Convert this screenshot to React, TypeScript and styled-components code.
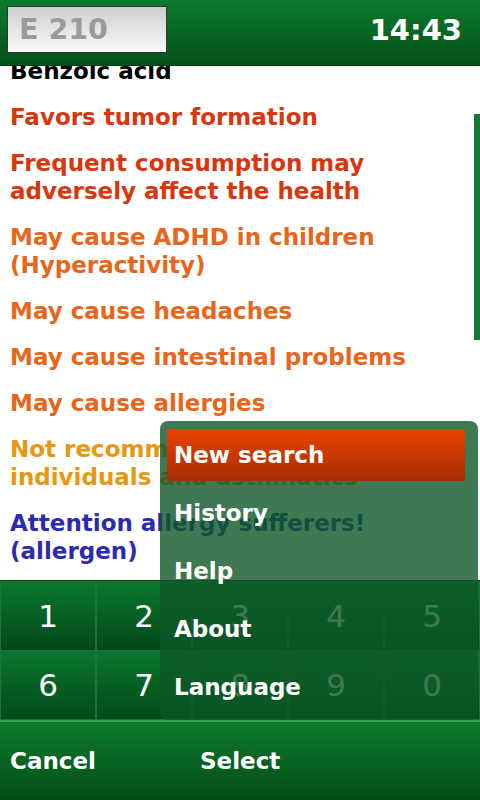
import React from 'react'
import styled, { createGlobalStyle } from 'styled-components'

const GlobalStyle = createGlobalStyle`
  html, body {
    margin: 0;
    padding: 0;
    background: #fff;
  }
  * { box-sizing: border-box; }
`

const Screen = styled.div`
  position: relative;
  width: 480px;
  height: 800px;
  display: flex;
  flex-direction: column;
  overflow: hidden;
  font-family: "DejaVu Sans", "Liberation Sans", sans-serif;
  font-weight: bold;
  background: #fff;
`

const Header = styled.div`
  height: 66px;
  flex-shrink: 0;
  display: flex;
  align-items: center;
  justify-content: space-between;
  padding: 0 18px 0 7px;
  background: linear-gradient(#0d7a2e, #045019);
  border-bottom: 1px solid #023a10;
  z-index: 2;
`

const SearchBox = styled.div`
  width: 160px;
  height: 47px;
  margin-bottom: 6px;
  border: 1px solid #2c3a2e;
  background: linear-gradient(#cfcfcf, #fafafa);
  color: #9a9a9a;
  font-size: 28.5px;
  line-height: 45px;
  padding-left: 11px;
`

const Clock = styled.div`
  color: #fff;
  font-size: 29px;
  margin-bottom: 6px;
`

const Content = styled.div`
  position: relative;
  flex: 1;
  overflow: hidden;
`

const List = styled.div`
  margin-top: -9px;
  padding: 0 10px 0 10px;
`

const Item = styled.div<{ $color: string }>`
  color: ${p => p.$color};
  font-size: 23px;
  line-height: 28px;
  margin-bottom: 18px;
`

const ScrollBar = styled.div`
  position: absolute;
  right: 0;
  top: 48px;
  width: 6px;
  height: 226px;
  background: #137a36;
`

const Keypad = styled.div`
  flex-shrink: 0;
  height: 140px;
  display: grid;
  grid-template-columns: repeat(5, 1fr);
  grid-template-rows: repeat(2, 1fr);
  gap: 2px;
  padding: 1px;
  background: #24703a;
  border-top: 1px solid #0a3d16;
`

const Key = styled.div`
  display: flex;
  align-items: center;
  justify-content: center;
  background: linear-gradient(#0b772c, #03481a);
  color: #fff;
  font-weight: normal;
  font-size: 31px;
`

const BottomBar = styled.div`
  height: 80px;
  flex-shrink: 0;
  display: flex;
  align-items: center;
  padding-left: 10px;
  border-top: 2px solid #3aa04f;
  background: linear-gradient(#0d7a2d, #034d18);
`

const SoftKey = styled.div<{ $width: number }>`
  width: ${p => p.$width}px;
  color: #fff;
  font-size: 23px;
`

const Menu = styled.div`
  position: absolute;
  right: 2px;
  bottom: 80px;
  width: 318px;
  padding: 5px 13px 4px 7px;
  border-radius: 8px 8px 6px 6px;
  background: rgba(14, 88, 40, 0.8);
  display: flex;
  flex-direction: column;
  z-index: 3;
`

const MenuItem = styled.div<{ $active?: boolean }>`
  height: 52px;
  margin: 3px 0;
  display: flex;
  align-items: center;
  padding-left: 7px;
  color: #fff;
  font-size: 23px;
  background: ${p => (p.$active ? 'linear-gradient(#e94200, #a62e04)' : 'transparent')};
`

const items: { text: string; color: string }[] = [
  { text: 'Benzoic acid', color: '#000' },
  { text: 'Favors tumor formation', color: '#d9360e' },
  { text: 'Frequent consumption may adversely affect the health', color: '#d9360e' },
  { text: 'May cause ADHD in children (Hyperactivity)', color: '#e8651a' },
  { text: 'May cause headaches', color: '#e8651a' },
  { text: 'May cause intestinal problems', color: '#e8651a' },
  { text: 'May cause allergies', color: '#e8651a' },
  { text: 'Not recommended for sensitive individuals and asthmatics', color: '#ea960f' },
  { text: 'Attention allergy sufferers! (allergen)', color: '#2b2bb2' },
]

const keys = ['1', '2', '3', '4', '5', '6', '7', '8', '9', '0']
const menuItems = ['New search', 'History', 'Help', 'About', 'Language']

export default function App() {
  return (
    <Screen>
      <GlobalStyle />
      <Header>
        <SearchBox>E 210</SearchBox>
        <Clock>14:43</Clock>
      </Header>
      <Content>
        <List>
          {items.map(it => (
            <Item key={it.text} $color={it.color}>{it.text}</Item>
          ))}
        </List>
        <ScrollBar />
      </Content>
      <Keypad>
        {keys.map(k => <Key key={k}>{k}</Key>)}
      </Keypad>
      <BottomBar>
        <SoftKey $width={190}>Cancel</SoftKey>
        <SoftKey $width={200}>Select</SoftKey>
      </BottomBar>
      <Menu>
        {menuItems.map((m, i) => (
          <MenuItem key={m} $active={i === 0}>{m}</MenuItem>
        ))}
      </Menu>
    </Screen>
  )
}
